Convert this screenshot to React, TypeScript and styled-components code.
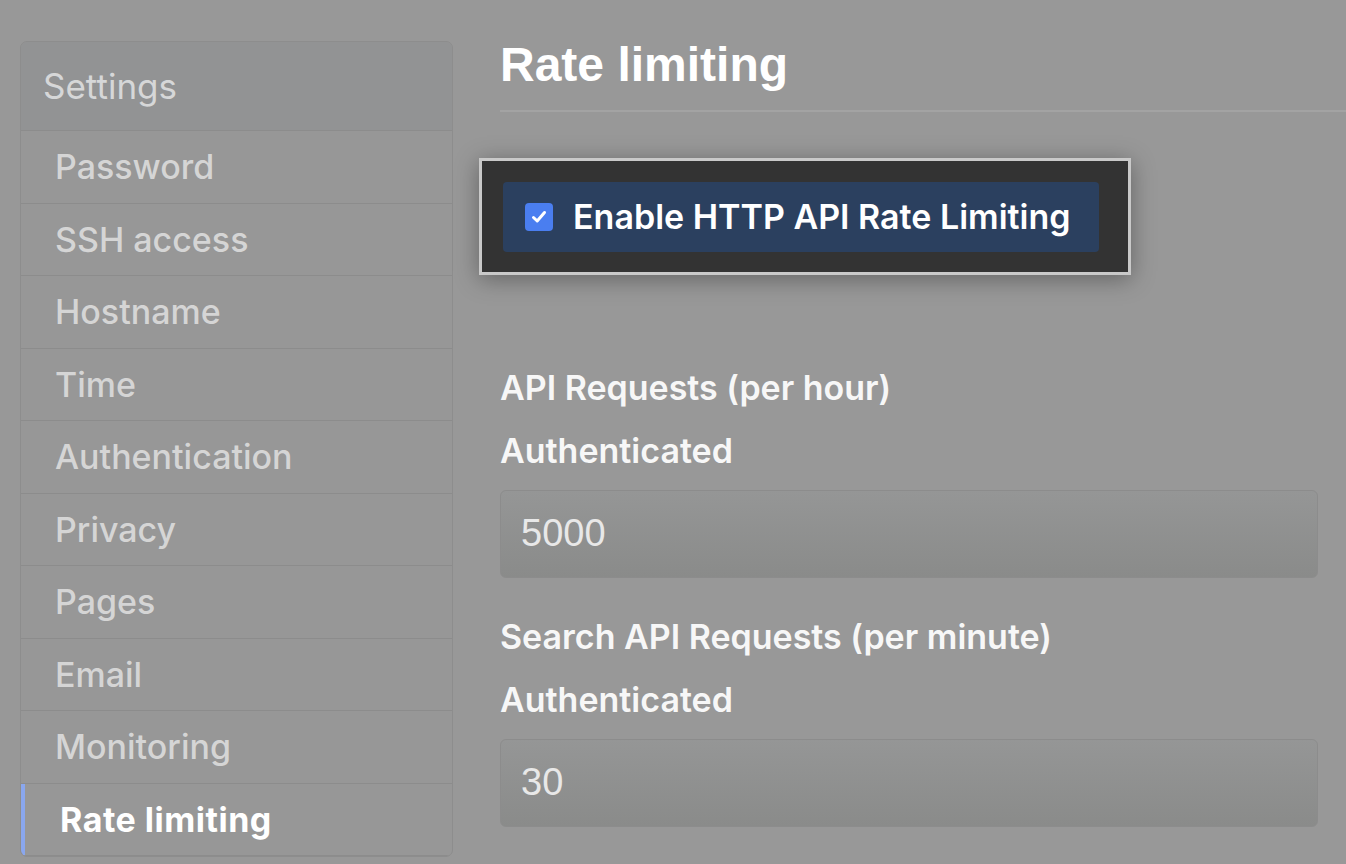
import React from "react";
import styled, { createGlobalStyle } from "styled-components";

const GlobalStyle = createGlobalStyle`
  html, body {
    margin: 0;
    padding: 0;
    background: #989898;
  }
  body {
    font-family: Inter, "Noto Sans", sans-serif;
  }
  * { box-sizing: border-box; }
`;

const Page = styled.div`
  display: flex;
  align-items: flex-start;
  gap: 47px;
  width: 1346px;
  height: 864px;
  overflow: hidden;
  padding: 36px 0 0 20px;
  background: #989898;
`;

const Sidebar = styled.nav`
  flex: 0 0 433px;
  margin-top: 5px;
  border: 1px solid #8d8d8d;
  border-radius: 7px;
  overflow: hidden;
  background: #979797;
`;

const SidebarHeading = styled.div`
  display: flex;
  align-items: center;
  height: 89px;
  padding-left: 22px;
  background: #929394;
  border-bottom: 1px solid #8c8c8c;
  color: #d6d7d8;
  font-family: Inter, sans-serif;
  font-size: 35px;
  font-weight: 400;
`;

const NavItem = styled.div<{ $selected?: boolean }>`
  display: flex;
  align-items: center;
  height: 72.5px;
  padding-left: ${(p) => (p.$selected ? "35px" : "34px")};
  border-bottom: 1px solid #8c8c8c;
  border-left: ${(p) => (p.$selected ? "4px solid #8aa7ee" : "0")};
  color: ${(p) => (p.$selected ? "#ffffff" : "#d5d5d5")};
  font-family: Inter, sans-serif;
  font-size: 34px;
  font-weight: ${(p) => (p.$selected ? 700 : 500)};
  letter-spacing: ${(p) => (p.$selected ? "0.5px" : "0")};
`;

const Main = styled.main`
  flex: 1;
  display: flex;
  flex-direction: column;
  align-items: flex-start;
`;

const Title = styled.h1`
  align-self: stretch;
  margin: 0;
  padding-bottom: 16px;
  border-bottom: 2px solid #a3a3a3;
  color: #ffffff;
  font-family: "Liberation Sans", Arial, sans-serif;
  font-size: 48px;
  font-weight: 700;
  line-height: 1.2;
`;

const Highlight = styled.div`
  width: 652px;
  margin: 46px 0 0 -21px;
  padding: 21px 29px 20px 21px;
  background: #333333;
  border: 3px solid #c9c9c9;
  box-shadow: 0 4px 22px rgba(0, 0, 0, 0.35);
`;

const ToggleRow = styled.label`
  display: flex;
  align-items: center;
  gap: 20px;
  height: 70px;
  padding-left: 22px;
  background: #2b405f;
  border-radius: 4px;
`;

const CheckBox = styled.span`
  display: inline-flex;
  align-items: center;
  justify-content: center;
  width: 28px;
  height: 28px;
  border-radius: 4px;
  background: #4a7ef0;
`;

const ToggleText = styled.span`
  color: #ffffff;
  font-family: Inter, sans-serif;
  font-size: 34px;
  font-weight: 600;
  line-height: 1;
`;

const FieldGroup = styled.section<{ $first?: boolean }>`
  display: flex;
  flex-direction: column;
  margin-top: ${(p) => (p.$first ? "93px" : "39px")};
`;

const GroupLabel = styled.div`
  color: #f7f7f7;
  font-family: Inter, sans-serif;
  font-size: 34px;
  font-weight: 600;
  line-height: 39px;
`;

const FieldLabel = styled.div`
  margin-top: 24px;
  color: #f7f7f7;
  font-family: Inter, sans-serif;
  font-size: 34px;
  font-weight: 600;
  line-height: 39px;
`;

const Input = styled.div`
  display: flex;
  align-items: center;
  width: 818px;
  height: 88px;
  margin-top: 20px;
  padding-left: 20px;
  border: 1px solid #8c8c8c;
  border-radius: 6px;
  background: linear-gradient(#959696, #8a8b8a);
  color: #e8e8e8;
  font-family: "Liberation Sans", Arial, sans-serif;
  font-size: 38px;
`;

const items = [
  "Password",
  "SSH access",
  "Hostname",
  "Time",
  "Authentication",
  "Privacy",
  "Pages",
  "Email",
  "Monitoring",
  "Rate limiting",
];

const groups = [
  { title: "API Requests (per hour)", value: "5000" },
  { title: "Search API Requests (per minute)", value: "30" },
];

export default function App() {
  return (
    <>
      <GlobalStyle />
      <Page>
        <Sidebar>
          <SidebarHeading>Settings</SidebarHeading>
          {items.map((item) => (
            <NavItem key={item} $selected={item === "Rate limiting"}>
              {item}
            </NavItem>
          ))}
        </Sidebar>
        <Main>
          <Title>Rate limiting</Title>
          <Highlight>
            <ToggleRow>
              <CheckBox>
                <svg width="20" height="20" viewBox="0 0 20 20" fill="none">
                  <path
                    d="M4.5 10.5 L8.2 14 L15.5 5.5"
                    stroke="#ffffff"
                    strokeWidth="3"
                    strokeLinecap="round"
                    strokeLinejoin="round"
                  />
                </svg>
              </CheckBox>
              <ToggleText>Enable HTTP API Rate Limiting</ToggleText>
            </ToggleRow>
          </Highlight>
          {groups.map((g, i) => (
            <FieldGroup key={g.title} $first={i === 0}>
              <GroupLabel>{g.title}</GroupLabel>
              <FieldLabel>Authenticated</FieldLabel>
              <Input>{g.value}</Input>
            </FieldGroup>
          ))}
        </Main>
      </Page>
    </>
  );
}
